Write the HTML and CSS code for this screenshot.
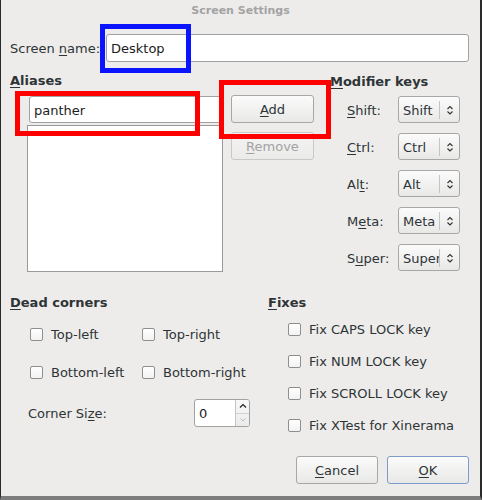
FILE: index.html
```html
<!DOCTYPE html>
<html>
<head>
<meta charset="utf-8">
<link rel="stylesheet" href="styles.css">
</head>
<body>
<div class="window">
  <div class="titlebar">Screen Settings</div>

  <div class="name-row">
    <label class="name-label">Screen <u>n</u>ame:</label>
    <div class="entry name-entry">Desktop</div>
  </div>

  <div class="main">
    <div class="aliases">
      <div class="heading"><u>A</u>liases</div>
      <div class="aliases-body">
        <div class="list-col">
          <div class="entry alias-entry">panther</div>
          <div class="listbox"></div>
        </div>
        <div class="btn-col">
          <div class="button"><u>A</u>dd</div>
          <div class="button disabled"><u>R</u>emove</div>
        </div>
      </div>
    </div>
    <div class="modifiers">
      <div class="heading"><u>M</u>odifier keys</div>
      <div class="mod-grid">
        <div class="mod-label"><u>S</u>hift:</div>
        <div class="combo"><span class="combo-text">Shift</span><span class="combo-arrow"><svg width="8" height="12" viewBox="0 0 8 12"><path d="M1.5 5 L4 2.5 L6.5 5 M1.5 7.5 L4 10 L6.5 7.5" fill="none" stroke="#333" stroke-width="1.1"/></svg></span></div>
        <div class="mod-label"><u>C</u>trl:</div>
        <div class="combo"><span class="combo-text">Ctrl</span><span class="combo-arrow"><svg width="8" height="12" viewBox="0 0 8 12"><path d="M1.5 5 L4 2.5 L6.5 5 M1.5 7.5 L4 10 L6.5 7.5" fill="none" stroke="#333" stroke-width="1.1"/></svg></span></div>
        <div class="mod-label">Al<u>t</u>:</div>
        <div class="combo"><span class="combo-text">Alt</span><span class="combo-arrow"><svg width="8" height="12" viewBox="0 0 8 12"><path d="M1.5 5 L4 2.5 L6.5 5 M1.5 7.5 L4 10 L6.5 7.5" fill="none" stroke="#333" stroke-width="1.1"/></svg></span></div>
        <div class="mod-label">M<u>e</u>ta:</div>
        <div class="combo"><span class="combo-text">Meta</span><span class="combo-arrow"><svg width="8" height="12" viewBox="0 0 8 12"><path d="M1.5 5 L4 2.5 L6.5 5 M1.5 7.5 L4 10 L6.5 7.5" fill="none" stroke="#333" stroke-width="1.1"/></svg></span></div>
        <div class="mod-label">S<u>u</u>per:</div>
        <div class="combo"><span class="combo-text">Super</span><span class="combo-arrow"><svg width="8" height="12" viewBox="0 0 8 12"><path d="M1.5 5 L4 2.5 L6.5 5 M1.5 7.5 L4 10 L6.5 7.5" fill="none" stroke="#333" stroke-width="1.1"/></svg></span></div>
      </div>
    </div>
  </div>

  <div class="lower">
    <div class="dead">
      <div class="heading"><u>D</u>ead corners</div>
      <div class="corner-grid">
        <div class="check"><span class="box"></span>Top-left</div>
        <div class="check"><span class="box"></span>Top-right</div>
        <div class="check"><span class="box"></span>Bottom-left</div>
        <div class="check"><span class="box"></span>Bottom-right</div>
      </div>
      <div class="size-row">
        <div class="size-label">Corner Si<u>z</u>e:</div>
        <div class="spin">
          <div class="spin-entry">0</div>
          <div class="spin-btns">
            <div class="spin-up"><svg width="8" height="6" viewBox="0 0 8 6"><path d="M1 4.5 L4 1.5 L7 4.5" fill="none" stroke="#222" stroke-width="1.2"/></svg></div>
            <div class="spin-down"><svg width="8" height="6" viewBox="0 0 8 6"><path d="M1.5 1.5 L4 4 L6.5 1.5" fill="none" stroke="#bbb" stroke-width="1"/></svg></div>
          </div>
        </div>
      </div>
    </div>
    <div class="fixes">
      <div class="heading"><u>F</u>ixes</div>
      <div class="fix-list">
        <div class="check"><span class="box"></span>Fix CAPS LOCK key</div>
        <div class="check"><span class="box"></span>Fix NUM LOCK key</div>
        <div class="check"><span class="box"></span>Fix SCROLL LOCK key</div>
        <div class="check"><span class="box"></span>Fix XTest for Xinerama</div>
      </div>
    </div>
  </div>

  <div class="actions">
    <div class="button action"><u>C</u>ancel</div>
    <div class="button action default"><u>O</u>K</div>
  </div>

  <div class="mark blue-mark"></div>
  <div class="mark red-mark-1"></div>
  <div class="mark red-mark-2"></div>
</div>
</body>
</html>
```

FILE: styles.css
```css
html, body {
  margin: 0;
  padding: 0;
  background: #edeceb;
}

u {
  text-decoration: underline;
  text-underline-offset: 2px;
}

.window {
  position: relative;
  width: 482px;
  height: 500px;
  box-sizing: border-box;
  background: #edeceb;
  border-left: 1px solid #2a2a2a;
  border-right: 2px solid #2a2a2a;
  border-bottom: 4px solid #7d7d7d;
  display: flex;
  flex-direction: column;
  font-family: "DejaVu Sans", sans-serif;
  font-size: 13px;
  color: #2e3436;
}

.titlebar {
  height: 21px;
  line-height: 21px;
  text-align: center;
  font-size: 11px;
  font-weight: bold;
  color: #a3a3a3;
}

.name-row {
  display: flex;
  align-items: center;
  margin-top: 13px;
  padding-left: 9px;
  padding-right: 11px;
}

.name-label {
  width: 96px;
  flex: none;
  padding-top: 1px;
}

.entry {
  box-sizing: border-box;
  height: 28px;
  line-height: 26px;
  padding-top: 1px;
  background: #ffffff;
  border: 1px solid #a2a2a2;
  border-radius: 3px;
  padding-left: 4px;
  color: #1c1c1c;
}

.name-entry {
  flex: 1;
}

.heading {
  font-weight: bold;
  line-height: 16px;
  height: 16px;
}

.main {
  display: flex;
  margin-top: 11px;
}

.aliases {
  width: 320px;
  padding-left: 9px;
  box-sizing: border-box;
}

.aliases-body {
  display: flex;
  margin-top: 6px;
  margin-left: 17px;
}

.list-col {
  width: 196px;
  display: flex;
  flex-direction: column;
}

.alias-entry {
  margin-left: 2px;
  width: 194px;
  margin-top: 1px;
  height: 27px;
}

.listbox {
  margin-top: 2px;
  height: 147px;
  box-sizing: border-box;
  background: #ffffff;
  border: 1px solid #9a9a9a;
}

.btn-col {
  margin-left: 8px;
  width: 83px;
  display: flex;
  flex-direction: column;
  gap: 9px;
}

.button {
  box-sizing: border-box;
  height: 28px;
  line-height: 26px;
  padding-top: 1px;
  text-align: center;
  border: 1px solid #a7a7a7;
  border-radius: 3px;
  background: linear-gradient(#fbfbfb, #e8e8e7);
  color: #2e3436;
}

.button.disabled {
  color: #a3a3a3;
  border-color: #c9c9c9;
  background: linear-gradient(#f3f3f2, #ebebea);
}

.modifiers {
  margin-left: 9px;
  margin-top: 1px;
}

.mod-grid {
  display: grid;
  grid-template-columns: 51px 62px;
  grid-auto-rows: 27px;
  row-gap: 10px;
  margin-top: 6px;
  padding-left: 17px;
  align-items: center;
}

.mod-label {
  padding-top: 1px;
}

.combo {
  box-sizing: border-box;
  height: 27px;
  display: flex;
  align-items: center;
  border: 1px solid #a7a7a7;
  border-radius: 3px;
  background: linear-gradient(#fbfbfb, #e8e8e7);
  overflow: hidden;
}

.combo-text {
  width: 41px;
  padding-left: 4px;
  padding-top: 1px;
  box-sizing: border-box;
  white-space: nowrap;
  overflow: hidden;
  border-right: 1px solid #c4c4c4;
  line-height: 17px;
}

.combo-arrow {
  flex: 1;
  display: flex;
  justify-content: center;
  align-items: center;
}

.lower {
  display: flex;
  margin-top: 23px;
}

.dead {
  width: 258px;
  padding-left: 9px;
  box-sizing: border-box;
}

.corner-grid {
  display: grid;
  grid-template-columns: 112px auto;
  grid-auto-rows: 20px;
  row-gap: 18px;
  margin-top: 13px;
  padding-left: 20px;
}

.check {
  display: flex;
  align-items: center;
  white-space: nowrap;
}

.box {
  width: 13px;
  height: 13px;
  box-sizing: border-box;
  border: 1px solid #8e8e8e;
  border-radius: 2px;
  background: linear-gradient(#ffffff, #f2f2f2);
  margin-right: 8px;
  flex: none;
}

.size-row {
  display: flex;
  align-items: center;
  margin-top: 17px;
  padding-left: 18px;
}

.size-label {
  width: 166px;
  padding-top: 1px;
}

.spin {
  display: flex;
  width: 56px;
  height: 28px;
  box-sizing: border-box;
  border: 1px solid #a2a2a2;
  border-radius: 3px;
  background: #ffffff;
  overflow: hidden;
}

.spin-entry {
  flex: 1;
  line-height: 26px;
  padding-top: 1px;
  padding-left: 4px;
  color: #1c1c1c;
}

.spin-btns {
  width: 13px;
  display: flex;
  flex-direction: column;
  border-left: 1px solid #c4c4c4;
  background: linear-gradient(#f8f8f8, #ebebeb);
}

.spin-up, .spin-down {
  flex: 1;
  display: flex;
  align-items: center;
  justify-content: center;
}

.spin-up {
  border-bottom: 1px solid #d2d2d2;
}

.fixes {
  margin-left: 9px;
}

.fix-list {
  display: flex;
  flex-direction: column;
  gap: 12px;
  margin-top: 8px;
  padding-left: 20px;
}

.fix-list .check {
  height: 20px;
}

.actions {
  margin-top: auto;
  margin-bottom: 12px;
  display: flex;
  justify-content: flex-end;
  gap: 9px;
  padding-right: 11px;
}

.button.action {
  width: 82px;
}

.button.default {
  border-color: #7c9ccb;
}

.mark {
  position: absolute;
  box-sizing: border-box;
  border-style: solid;
  border-width: 5px;
}

.blue-mark {
  left: 99px;
  top: 24px;
  width: 91px;
  height: 49px;
  border-color: #0a14ff;
}

.red-mark-1 {
  left: 14px;
  top: 91px;
  width: 185px;
  height: 45px;
  border-color: #ff0000;
}

.red-mark-2 {
  left: 218px;
  top: 80px;
  width: 112px;
  height: 59px;
  border-color: #ff0000;
}
```
